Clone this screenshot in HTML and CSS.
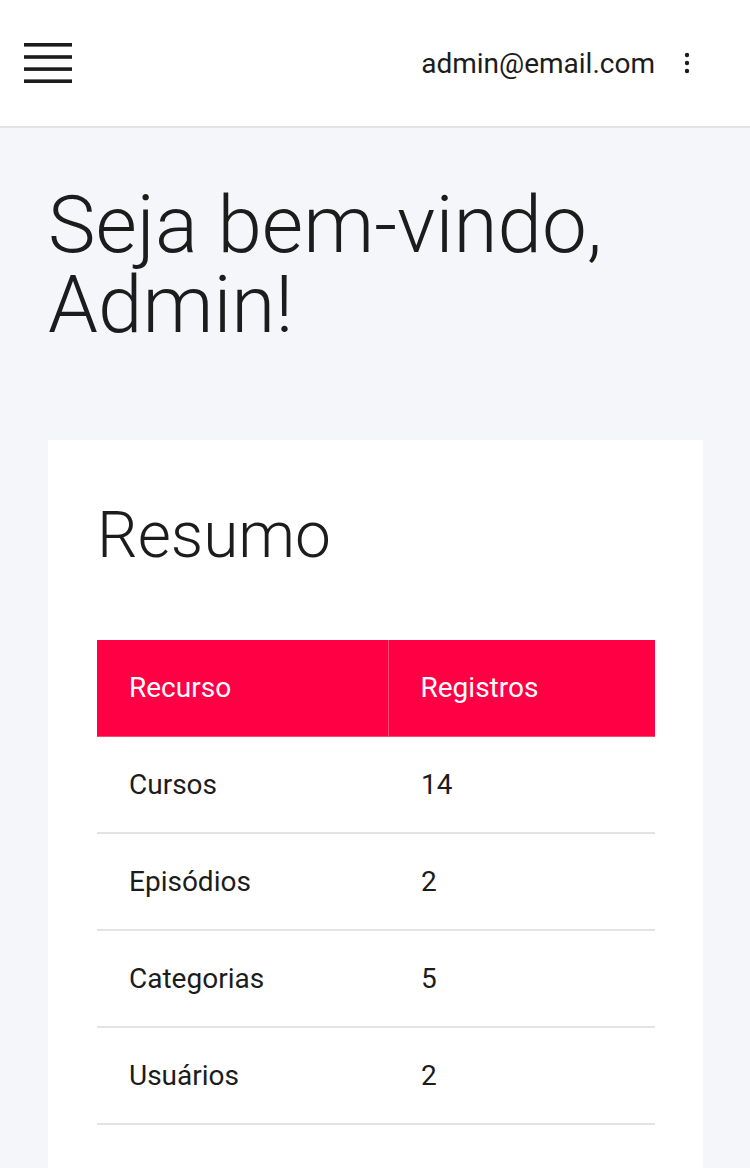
FILE: index.html
```html
<!DOCTYPE html>
<html lang="pt-BR">
<head>
<meta charset="utf-8">
<title>Admin</title>
<link rel="stylesheet" href="styles.css">
</head>
<body>
<header class="topbar">
  <button class="menu-btn" aria-label="Menu">
    <svg width="48" height="40" viewBox="0 0 48 40">
      <rect x="0" y="0" width="48" height="3.6" fill="#1c1c1c"/>
      <rect x="0" y="12.2" width="48" height="3.6" fill="#1c1c1c"/>
      <rect x="0" y="24.3" width="48" height="3.6" fill="#1c1c1c"/>
      <rect x="0" y="36.4" width="48" height="3.6" fill="#1c1c1c"/>
    </svg>
  </button>
  <div class="user">
    <span class="email">admin@email.com</span>
    <button class="more-btn" aria-label="Mais">
      <svg width="24" height="24" viewBox="0 0 24 24">
        <circle cx="12" cy="4" r="2.2" fill="#1c1c1c"/>
        <circle cx="12" cy="12" r="2.2" fill="#1c1c1c"/>
        <circle cx="12" cy="20" r="2.2" fill="#1c1c1c"/>
      </svg>
    </button>
  </div>
</header>
<main class="content">
  <h1 class="welcome">Seja bem-vindo, Admin!</h1>
  <section class="card">
    <h2 class="card-title">Resumo</h2>
    <table class="summary">
      <colgroup><col class="c1"><col class="c2"></colgroup>
      <thead>
        <tr><th>Recurso</th><th>Registros</th></tr>
      </thead>
      <tbody>
        <tr><td>Cursos</td><td>14</td></tr>
        <tr><td>Episódios</td><td>2</td></tr>
        <tr><td>Categorias</td><td>5</td></tr>
        <tr><td>Usuários</td><td>2</td></tr>
      </tbody>
    </table>
  </section>
</main>
</body>
</html>
```

FILE: styles.css
```css
* { box-sizing: border-box; }
html, body {
  margin: 0;
  padding: 0;
}
body {
  background: #f5f6fa;
  font-family: Roboto, "Liberation Sans", sans-serif;
  color: #1c1c1c;
}
.topbar {
  height: 128px;
  background: #fff;
  border-bottom: 2px solid #e2e3e6;
  display: flex;
  align-items: center;
  justify-content: space-between;
  padding: 0 51px 0 24px;
}
.menu-btn, .more-btn {
  border: 0;
  background: none;
  padding: 0;
  display: flex;
  align-items: center;
  cursor: pointer;
}
.user {
  display: flex;
  align-items: center;
  gap: 20px;
}
.email {
  font-size: 28px;
  line-height: 33px;
  color: #1c1c1c;
  padding-left: 1px;
}
.content {
  padding: 57px 47px 0 48px;
}
.welcome {
  margin: 0 0 95px;
  font-size: 80px;
  line-height: 80px;
  font-weight: 300;
  color: #1c1c1c;
  max-width: 600px;
}
.card {
  background: #fff;
  padding: 57px 48px 64px 49px;
}
.card-title {
  margin: 0 0 66px;
  font-size: 64px;
  line-height: 77px;
  font-weight: 300;
  color: #1c1c1c;
}
.summary {
  width: 558px;
  border-collapse: collapse;
  table-layout: fixed;
  font-size: 28px;
  line-height: 42px;
}
.summary .c1 { width: 291px; }
.summary .c2 { width: 267px; }
.summary th {
  background: #ff0044;
  color: #fff;
  font-weight: 400;
  text-align: left;
  padding: 27px 32px;
  border-bottom: 1px solid #f54a72;
}
.summary th + th {
  border-left: 1px solid #f54a72;
}
.summary td {
  padding: 26.5px 32px 26.5px;
  border-bottom: 2px solid #e3e3e5;
  color: #1c1c1c;
}
.summary td + td {
  padding-left: 33px;
}
```
